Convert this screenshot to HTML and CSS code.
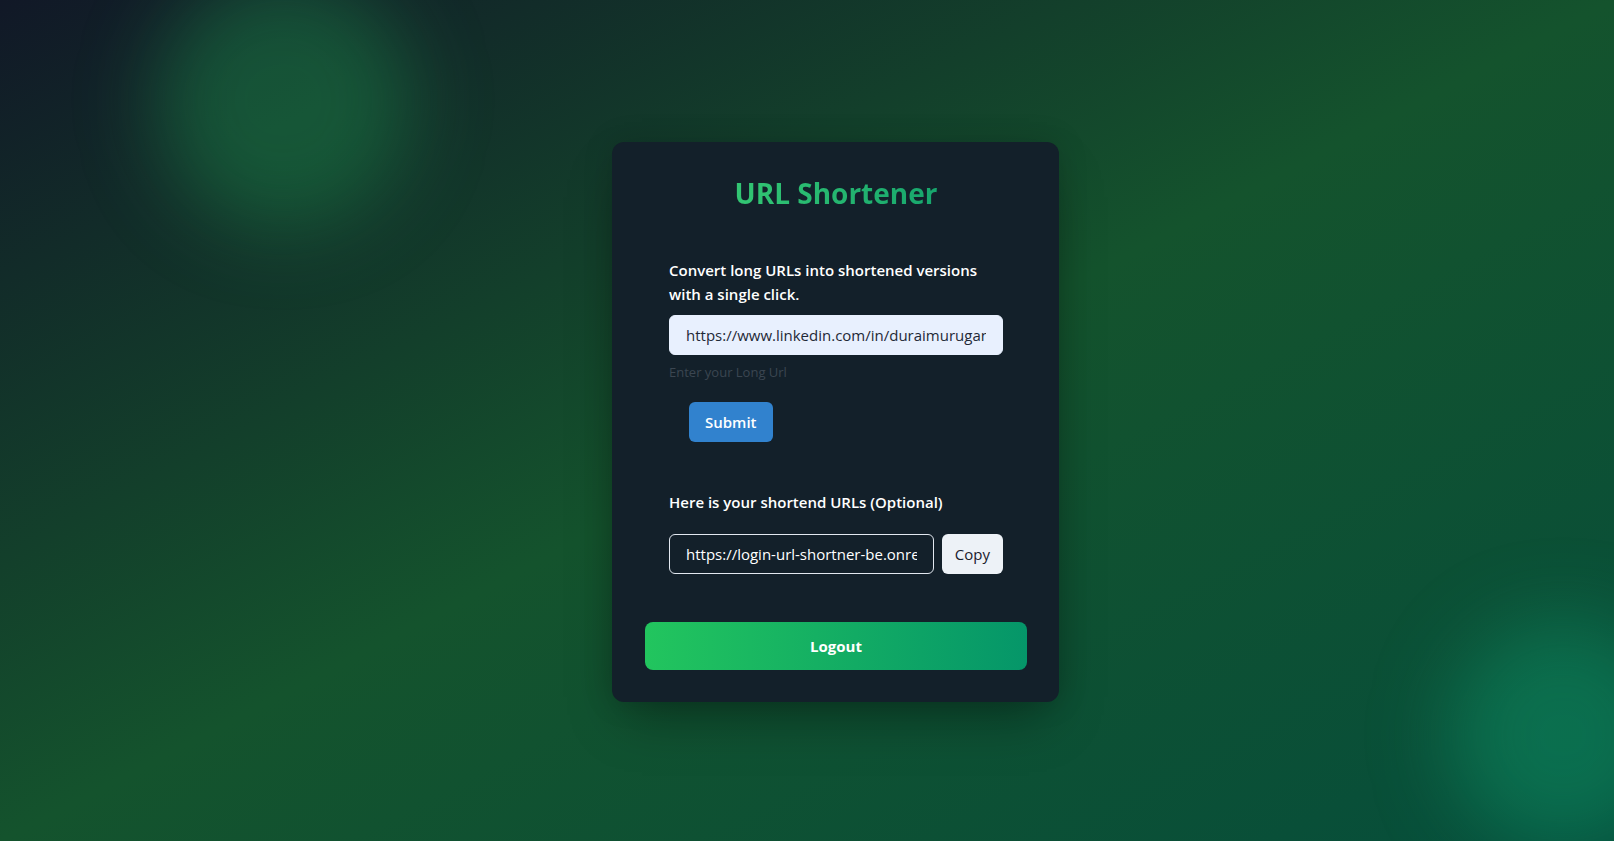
FILE: index.html
```html
<!DOCTYPE html>
<html lang="en">
<head>
<meta charset="utf-8">
<title>URL Shortener</title>
<link rel="stylesheet" href="styles.css">
</head>
<body>
<div class="page">
  <div class="blob blob-a"></div>
  <div class="blob blob-b"></div>
  <main class="card">
    <h1 class="title"><span class="title-text">URL Shortener</span></h1>
    <section class="panel">
      <p class="lead">Convert long URLs into shortened versions with a single click.</p>
      <input class="field field-filled" type="text" value="https://www.linkedin.com/in/duraimurugan-m" readonly>
      <div class="helper">Enter your Long Url</div>
      <button class="btn-submit" type="button">Submit</button>
      <p class="label">Here is your shortend URLs (Optional)</p>
      <div class="row">
        <input class="field field-outline" type="text" value="https://login-url-shortner-be.onrender.com/abc123" readonly>
        <button class="btn-copy" type="button">Copy</button>
      </div>
    </section>
    <button class="btn-logout" type="button">Logout</button>
  </main>
</div>
</body>
</html>
```
FILE: styles.css
```css
* { box-sizing: border-box; }
html, body { margin: 0; padding: 0; height: 100%; }
body {
  font-family: "Open Sans", "Noto Sans", sans-serif;
  background: linear-gradient(to bottom right, #111827 0%, #14532d 50%, #064e3b 100%);
  overflow: hidden;
}
.page {
  position: relative;
  height: 841px;
  display: flex;
  align-items: center;
  justify-content: center;
  padding-left: 57px;
  padding-top: 3px;
}
.blob {
  position: absolute;
  border-radius: 50%;
}
.blob-a {
  width: 256px; height: 256px;
  left: 155px; top: -28px;
  background: rgba(34, 197, 94, 0.28);
  filter: blur(40px);
}
.blob-b {
  width: 230px; height: 230px;
  left: 1448px; top: 620px;
  background: rgba(16, 185, 129, 0.3);
  filter: blur(40px);
}
.card {
  position: relative;
  width: 447px;
  padding: 32px 32px 32px 33px;
  background: #13202a;
  border-radius: 12px;
  box-shadow: 0 25px 50px -12px rgba(0, 0, 0, 0.35), 0 0 30px rgba(0, 0, 0, 0.15);
}
.title {
  margin: 1px 0 23px;
  font-size: 28px;
  line-height: 36px;
  font-weight: 700;
  text-align: center;
}
.title-text {
  background: linear-gradient(to right, #33c673, #17a66d);
  -webkit-background-clip: text;
  background-clip: text;
  color: transparent;
}
.panel {
  padding: 24px;
  display: flex;
  flex-direction: column;
  align-items: flex-start;
}
.lead, .label {
  margin: 0;
  color: #ffffff;
  font-size: 15px;
  line-height: 24px;
  font-weight: 600;
}
.lead { margin-bottom: 9px; }
.field {
  width: 100%;
  height: 40px;
  padding: 0 16px;
  font-family: inherit;
  font-size: 15px;
  border-radius: 6px;
  outline: none;
}
.field-filled {
  background: #e8f0fe;
  border: 1px solid #e8f0fe;
  color: #1f2937;
}
.field-outline {
  flex: 1;
  width: auto;
  min-width: 0;
  background: transparent;
  border: 1px solid #e2e8f0;
  color: #ffffff;
}
.helper {
  margin-top: 7px;
  font-size: 13px;
  line-height: 20px;
  color: #3b4651;
}
.btn-submit {
  margin: 20px 0 0 20px;
  height: 40px;
  padding: 0 16px;
  border: none;
  border-radius: 6px;
  background: #3182ce;
  color: #ffffff;
  font-family: inherit;
  font-size: 15px;
  font-weight: 600;
}
.label { margin-top: 48px; }
.row {
  margin-top: 20px;
  width: 100%;
  display: flex;
  gap: 8px;
}
.btn-copy {
  height: 40px;
  padding: 0 13px;
  border: none;
  border-radius: 6px;
  background: #edf2f7;
  color: #1a202c;
  font-family: inherit;
  font-size: 15px;
  font-weight: 500;
}
.btn-logout {
  display: block;
  width: 100%;
  height: 48px;
  margin-top: 24px;
  border: none;
  border-radius: 8px;
  background: linear-gradient(to right, #22c55e, #059669);
  color: #ffffff;
  font-family: inherit;
  font-size: 15px;
  font-weight: 700;
}
```
